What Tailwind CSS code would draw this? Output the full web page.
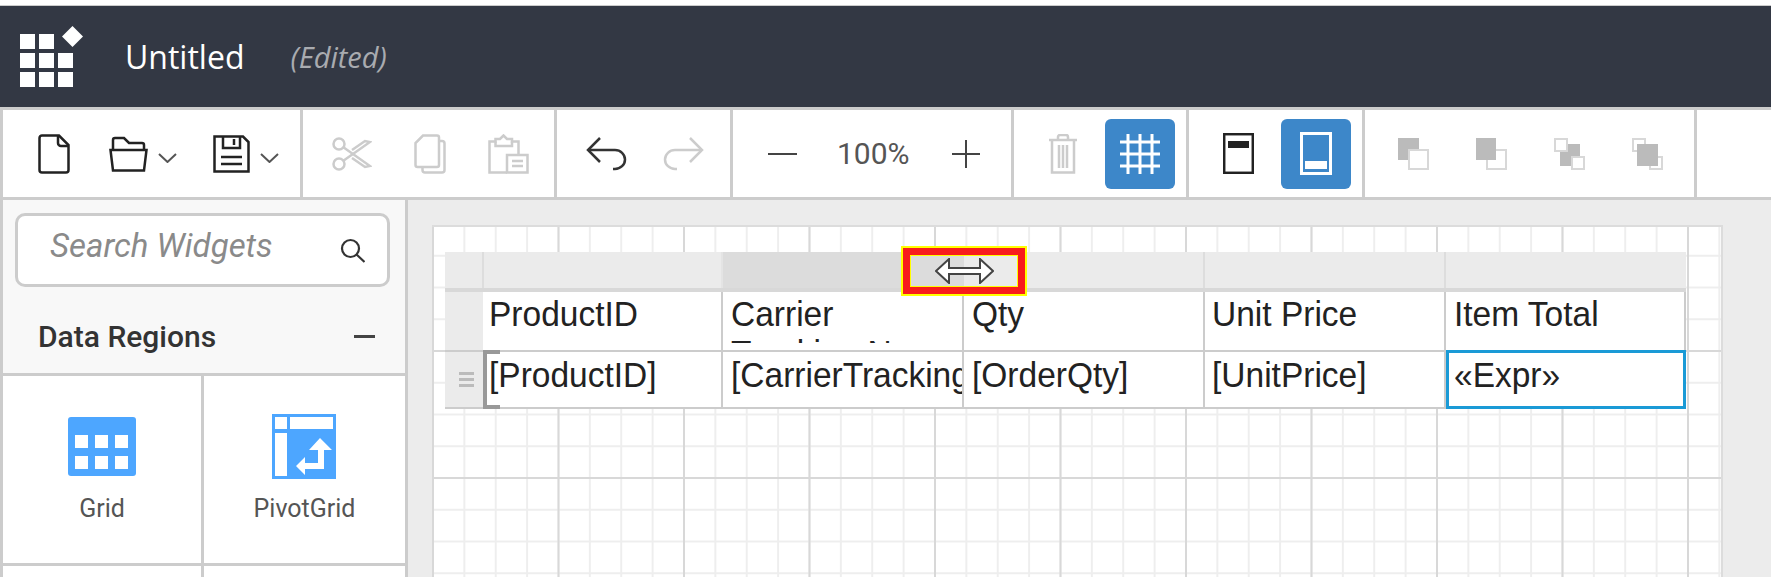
<!DOCTYPE html>
<html lang="en">

<head>
    <meta charset="UTF-8" />
    <meta name="viewport" content="width=device-width, initial-scale=1.0" />
    <title>Report Designer</title>
    <script src="https://cdn.jsdelivr.net/npm/@tailwindcss/browser@4"></script>
</head>

<body class="bg-white w-[1771px] h-[577px] overflow-hidden font-['Roboto',sans-serif]">

    <!-- Title bar -->
    <div class="h-[6px] bg-white border-b border-[#ccc]"></div>
    <div class="h-[101px] bg-[#333844] flex items-center">
        <svg class="ml-[20px] shrink-0" width="64" height="62" viewBox="0 0 64 62" fill="#fff">
            <rect x="0" y="8" width="15" height="15" /><rect x="19" y="8" width="15" height="15" />
            <rect x="0" y="27" width="15" height="15" /><rect x="19" y="27" width="15" height="15" /><rect x="38" y="27" width="15" height="15" />
            <rect x="0" y="46" width="15" height="15" /><rect x="19" y="46" width="15" height="15" /><rect x="38" y="46" width="15" height="15" />
            <path d="M52.5 0L63 10.500L52.500 21L42 10.500Z" />
        </svg>
        <span class="ml-[41px] text-white text-[32px] font-['Open_Sans',sans-serif]">Untitled</span>
        <span class="ml-[46px] text-[#a9abb0] text-[29px] italic font-['Open_Sans',sans-serif]">(Edited)</span>
    </div>

    <!-- Toolbar -->
    <div class="h-[93px] border-y-[3px] border-l-[3px] border-[#ccc] flex">
        <div class="w-[300px] h-[87px] border-r-[3px] border-[#ccc] flex items-center pl-[35px]">
            <svg width="32" height="40" viewBox="0 0 32 40" fill="none" stroke="#222" stroke-width="2.500">
                <path d="M4 1.500H21L30.500 11V36a2.500 2.500 0 0 1-2.500 2.500H4A2.500 2.500 0 0 1 1.500 36V4A2.500 2.500 0 0 1 4 1.500Z" />
                <path d="M20 1.500V9a3 3 0 0 0 3 3h7.500" />
            </svg>
            <svg class="ml-[39px]" width="39" height="36" viewBox="0 0 39 36" fill="none" stroke="#222" stroke-width="2.500">
                <path d="M4 14V4a2 2 0 0 1 2-2H15l5 5h13a2 2 0 0 1 2 2v5" />
                <path d="M1.500 14H37.500L35 34.500H4Z" />
            </svg>
            <svg class="ml-[10px] mt-[8px]" width="19" height="10" viewBox="0 0 19 10" fill="none" stroke="#555" stroke-width="2">
                <path d="M1 1L9.500 9L18 1" />
            </svg>
            <svg class="ml-[36px]" width="37" height="38" viewBox="0 0 37 38" fill="none" stroke="#222" stroke-width="2.500">
                <path d="M1.500 1.500H30L35.500 7V36.500H1.500Z" />
                <path d="M10 1.500V13H27V1.500" />
                <path d="M21 4V10" />
                <path d="M8 22H29M8 29H29" />
            </svg>
            <svg class="ml-[10px] mt-[8px]" width="19" height="10" viewBox="0 0 19 10" fill="none" stroke="#555" stroke-width="2">
                <path d="M1 1L9.500 9L18 1" />
            </svg>
        </div>

        <div class="w-[254px] h-[87px] border-r-[3px] border-[#ccc] flex items-center pl-[29px]">
            <svg width="40" height="34" viewBox="0 0 40 34" fill="none" stroke="#ccc" stroke-width="2.500">
                <circle cx="7" cy="7" r="5.500" />
                <circle cx="7" cy="27" r="5.500" />
                <path d="M11 24L38 5L33 4L20 13" />
                <path d="M11 10L38 29L33 30L20 21" />
            </svg>
            <svg class="ml-[42px]" width="32" height="40" viewBox="0 0 32 40" fill="none" stroke="#ccc" stroke-width="2.500">
                <path d="M25 7H28a2.500 2.500 0 0 1 2.500 2.500V36a2.500 2.500 0 0 1-2.500 2.500H11A2.500 2.500 0 0 1 8.500 36V33" />
                <path d="M9 1.500H23a2 2 0 0 1 2 2V31a2 2 0 0 1-2 2H3.500a2 2 0 0 1-2-2V9Z" />
            </svg>
            <svg class="ml-[42px]" width="41" height="40" viewBox="0 0 41 40" fill="none" stroke="#ccc" stroke-width="2.500">
                <path d="M19 38.500H1.500V7.500H7.500V5H12L15.500 1.500L19 5H24V7.500H30.500V20" />
                <path d="M7.500 7.500V12H24V7.500" />
                <path d="M19 21H39.500V38.500H19Z" />
                <path d="M24 27H35M24 32H35" />
            </svg>
        </div>

        <div class="w-[176px] h-[87px] border-r-[3px] border-[#ccc] flex items-center pl-[29px]">
            <svg width="41" height="35" viewBox="0 0 41 35" fill="none" stroke="#333" stroke-width="2.500">
                <path d="M14 2L2 14L14 26" />
                <path d="M2 14H29a10 9.500 0 0 1 0 19H27" />
            </svg>
            <svg class="ml-[36px]" width="41" height="35" viewBox="0 0 41 35" fill="none" stroke="#ccc" stroke-width="2.500">
                <path d="M27 2L39 14L27 26" />
                <path d="M39 14H12a10 9.500 0 0 0 0 19H14" />
            </svg>
        </div>

        <div class="w-[281px] h-[87px] border-r-[3px] border-[#ccc] flex items-center pl-[35px]">
            <div class="w-[29px] h-[2px] bg-[#444]"></div>
            <span class="ml-[40px] text-[30px] text-[#555]">100%</span>
            <svg class="ml-[42px]" width="28" height="28" viewBox="0 0 28 28" fill="none" stroke="#444" stroke-width="2">
                <path d="M0 14H28M14 0V28" />
            </svg>
        </div>

        <div class="w-[175px] h-[87px] border-r-[3px] border-[#ccc] flex items-center pl-[34px]">
            <svg width="30" height="40" viewBox="0 0 30 40" fill="none" stroke="#ccc" stroke-width="2.500">
                <path d="M1 6H29" />
                <path d="M10 6V3a2 2 0 0 1 2-2h6a2 2 0 0 1 2 2v3" />
                <path d="M4 6V38.500H26V6" />
                <path d="M11 11V34M15 11V34M19 11V34" />
            </svg>
            <div class="ml-[27px] w-[70px] h-[70px] rounded-md bg-[#3d87c9] flex items-center justify-center">
                <svg width="40" height="40" viewBox="0 0 40 40" fill="none" stroke="#fff" stroke-width="3">
                    <path d="M8 0V40M20 0V40M32 0V40M0 8H40M0 20H40M0 32H40" />
                </svg>
            </div>
        </div>

        <div class="w-[176px] h-[87px] border-r-[3px] border-[#ccc] flex items-center pl-[34px]">
            <svg width="31" height="41" viewBox="0 0 31 41" fill="none">
                <rect x="1.200" y="1.200" width="28.600" height="38.600" stroke="#222" stroke-width="2.500" />
                <rect x="5" y="8" width="21" height="7" fill="#222" />
            </svg>
            <div class="ml-[27px] w-[70px] h-[70px] rounded-md bg-[#3d87c9] flex items-center justify-center">
                <svg width="32" height="43" viewBox="0 0 32 43" fill="none">
                    <rect x="1.500" y="1.500" width="29" height="40" stroke="#fff" stroke-width="3" />
                    <rect x="5" y="29" width="22" height="8" fill="#fff" />
                </svg>
            </div>
        </div>

        <div class="w-[332px] h-[87px] border-r-[3px] border-[#ccc] flex items-center pl-[33px] gap-[47px]">
            <svg width="31" height="32" viewBox="0 0 31 32" fill="none">
                <rect x="0" y="0" width="21" height="22" fill="#bbb" />
                <rect x="11" y="12" width="19" height="19" fill="#fff" stroke="#d8d8d8" stroke-width="2" />
            </svg>
            <svg width="31" height="32" viewBox="0 0 31 32" fill="none">
                <rect x="11" y="12" width="19" height="19" fill="#fff" stroke="#d8d8d8" stroke-width="2" />
                <rect x="0" y="0" width="20" height="22" fill="#bbb" />
            </svg>
            <svg width="31" height="32" viewBox="0 0 31 32" fill="none">
                <rect x="6" y="6" width="20" height="22" fill="#bbb" />
                <rect x="1" y="1" width="12" height="12" fill="#fff" stroke="#d8d8d8" stroke-width="2" />
                <rect x="18" y="19" width="12" height="12" fill="#fff" stroke="#d8d8d8" stroke-width="2" />
            </svg>
            <svg width="31" height="32" viewBox="0 0 31 32" fill="none">
                <rect x="1" y="1" width="12" height="12" fill="#fff" stroke="#d8d8d8" stroke-width="2" />
                <rect x="18" y="19" width="12" height="12" fill="#fff" stroke="#d8d8d8" stroke-width="2" />
                <rect x="5" y="6" width="21" height="22" fill="#bbb" />
            </svg>
        </div>
    </div>

    <div class="flex h-[377px]">
        <!-- Widgets panel -->
        <div class="w-[408px] h-full shrink-0 border-x-[3px] border-[#ccc] bg-[#f8f8f8]">
            <div class="ml-[12px] mt-[13px] w-[375px] h-[74px] bg-white border-[3px] border-[#ccc] rounded-[10px] flex items-center pl-[32px] pr-[22px] justify-between">
                <span class="mb-[8px] text-[33px] italic text-[#8a8a8a] whitespace-nowrap">Search Widgets</span>
                <svg width="25" height="25" viewBox="0 0 25 25" fill="none" stroke="#333" stroke-width="2.200">
                    <circle cx="10.500" cy="10.500" r="8.500" />
                    <path d="M16.500 16.500L24.500 24" />
                </svg>
            </div>
            <div class="h-[86px] flex items-center justify-between pl-[35px] pr-[30px] pt-[13px]">
                <span class="text-[30px] font-medium text-[#333]">Data Regions</span>
                <div class="w-[21px] h-[3px] bg-[#444]"></div>
            </div>
            <div class="grid grid-cols-[201px_201px] border-t-[3px] border-[#ccc] bg-white">
                <div class="h-[190px] border-r-[3px] border-b-[3px] border-[#ccc] flex flex-col items-center pt-[41px]">
                    <svg width="68" height="59" viewBox="0 0 68 59">
                        <rect width="68" height="59" rx="3" fill="#4da6ff" />
                        <g fill="#fff">
                            <rect x="7" y="18" width="13" height="13" /><rect x="27" y="18" width="13" height="13" /><rect x="47" y="18" width="13" height="13" />
                            <rect x="7" y="39" width="13" height="13" /><rect x="27" y="39" width="13" height="13" /><rect x="47" y="39" width="13" height="13" />
                        </g>
                    </svg>
                    <span class="mt-[14px] text-[25px] text-[#555]">Grid</span>
                </div>
                <div class="h-[190px] border-b-[3px] border-[#ccc] flex flex-col items-center pt-[38px]">
                    <svg class="-ml-[2px]" width="64" height="65" viewBox="0 0 64 65">
                        <rect width="64" height="65" fill="#4da6ff" />
                        <g fill="#fff">
                            <rect x="3" y="3" width="12" height="12" />
                            <rect x="18" y="3" width="43" height="12" />
                            <rect x="3" y="19" width="12" height="43" />
                            <path d="M48 24L60 36H52V55H33V61L24 52L33 43V49H46V36H37Z" />
                        </g>
                    </svg>
                    <span class="mt-[11px] text-[25px] text-[#555]">PivotGrid</span>
                </div>
                <div class="h-[12px] border-r-[3px] border-[#ccc]"></div>
                <div class="h-[12px]"></div>
            </div>
        </div>

        <!-- Report canvas -->
        <div class="flex-1 bg-[#ececec] pl-[24px] pt-[25px] pr-[48px]">
            <div class="h-full border-t-2 border-r-2 border-[#dcdcdc] bg-white pl-[13px] pt-[25px] [background-image:linear-gradient(to_right,#d8d8d8_2px,transparent_2px),linear-gradient(to_bottom,#d8d8d8_2px,transparent_2px),linear-gradient(to_right,#eeeeee_2px,transparent_2px),linear-gradient(to_bottom,#eeeeee_2px,transparent_2px)] [background-size:125.5px_127px,125.5px_127px,31.375px_31.75px,31.375px_31.75px] [background-position:0_-4px]">
                <div class="relative w-[1241px] font-['Liberation_Sans',sans-serif] text-[33.5px] leading-[37px] text-[#222]">

                    <!-- Column header strip -->
                    <div class="flex h-[40px] bg-[#ebebeb] border-b-[4px] border-[#d8d8d8]">
                        <div class="w-[39px] border-r-2 border-[#ddd]"></div>
                        <div class="w-[239px] border-r-2 border-[#e4e4e4]"></div>
                        <div class="w-[241px] bg-[#dcdcdc]"></div>
                        <div class="w-[241px] border-r-2 border-[#ddd]"></div>
                        <div class="w-[241px] border-r-2 border-[#ddd]"></div>
                        <div class="w-[240px]"></div>
                    </div>

                    <!-- Header row -->
                    <div class="flex h-[60px] border-b-2 border-[#ccc]">
                        <div class="w-[38px] bg-[#ebebeb]"></div>
                        <div class="w-[240px] pl-[6px] pt-[4px] bg-white border-r-2 border-[#ccc]"><span class="inline-block origin-bottom scale-y-[1.06]">ProductID</span></div>
                        <div class="w-[241px] bg-white border-r-2 border-[#ccc]">
                            <div class="h-[51px] overflow-hidden pl-[8px] pt-[2px]">
                                <div class="origin-top scale-y-[1.06]">Carrier Tracking No</div>
                            </div>
                        </div>
                        <div class="w-[241px] pl-[8px] pt-[4px] bg-white border-r-2 border-[#ccc]"><span class="inline-block origin-bottom scale-y-[1.06]">Qty</span></div>
                        <div class="w-[241px] pl-[7px] pt-[4px] bg-white border-r-2 border-[#ccc]"><span class="inline-block origin-bottom scale-y-[1.06]">Unit Price</span></div>
                        <div class="w-[240px] pl-[8px] pt-[4px] bg-white border-r-2 border-[#ccc]"><span class="inline-block origin-bottom scale-y-[1.06]">Item Total</span></div>
                    </div>

                    <!-- Data row -->
                    <div class="flex h-[57px]">
                        <div class="w-[38px] bg-[#ebebeb] flex items-center justify-end pr-[9px] relative border-b-2 border-[#ccc]">
                            <svg width="15" height="15" viewBox="0 0 15 15" fill="none" stroke="#bbb" stroke-width="3">
                                <path d="M0 1.500H15M0 7.500H15M0 13.500H15" />
                            </svg>
                        </div>
                        <div class="relative w-[240px] pl-[6px] pt-[5px] bg-white border-r-2 border-b-2 border-[#ccc]">
                            <span class="absolute left-0 top-[-2px] w-[17px] h-[59px] border-l-[4px] border-y-[4px] border-[#999]"></span>
                            <span class="inline-block origin-bottom scale-y-[1.06]">[ProductID]</span>
                        </div>
                        <div class="w-[241px] pl-[8px] pt-[5px] bg-white border-r-2 border-b-2 border-[#ccc] overflow-hidden whitespace-nowrap"><span class="inline-block origin-bottom scale-y-[1.06]">[CarrierTrackingNumber]</span></div>
                        <div class="w-[241px] pl-[8px] pt-[5px] bg-white border-r-2 border-b-2 border-[#ccc]"><span class="inline-block origin-bottom scale-y-[1.06]">[OrderQty]</span></div>
                        <div class="w-[241px] pl-[7px] pt-[5px] bg-white border-r-2 border-b-2 border-[#ccc]"><span class="inline-block origin-bottom scale-y-[1.06]">[UnitPrice]</span></div>
                        <div class="w-[240px] pl-[5px] pt-[4px] bg-white border-[3px] border-[#1a9ad6] -mt-[2px] h-[59px]"><span class="inline-block origin-bottom scale-y-[1.06]">«Expr»</span></div>
                    </div>

                    <!-- Resize cursor callout -->
                    <div class="absolute left-[456px] top-[-6px] w-[126px] h-[50px] border-2 border-[#ffff00]">
                        <div class="w-full h-full border-[7px] border-[#f81c1c]">
                            <div class="w-full h-full border border-[#ffff00] flex items-center justify-center">
                                <svg width="59" height="26" viewBox="0 0 59 26" fill="#fff" stroke="#444" stroke-width="2">
                                    <path d="M1 13L14 1V10H45V1L58 13L45 25V16H14V25Z" />
                                </svg>
                            </div>
                        </div>
                    </div>
                </div>
            </div>
        </div>
    </div>

</body>

</html>
